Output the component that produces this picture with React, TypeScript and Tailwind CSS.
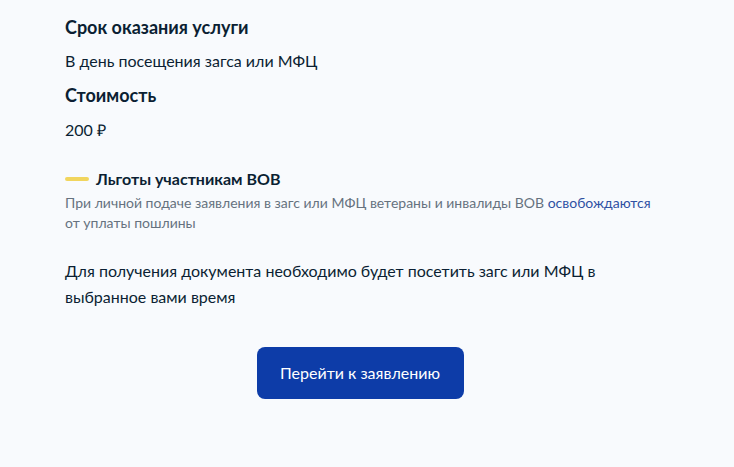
export default function App() {
	return (
		<div className="min-h-[467px] w-full bg-[#f8fafd] [font-family:Lato,sans-serif] text-[#0b1f33]">
			<div className="w-[590px] pl-[65px] pt-[15px] box-content">
				<h3 className="text-[18px] font-bold leading-[24px]">Срок оказания услуги</h3>
				<p className="mt-[10px] text-[16px] leading-[24px]">В день посещения загса или МФЦ</p>
				<h3 className="mt-[10px] text-[18px] font-bold leading-[24px]">Стоимость</h3>
				<p className="mt-[11px] text-[16px] leading-[24px]">200 ₽</p>

				{/* льготы */}
				<div className="mt-[25px] flex items-center gap-[7px]">
					<span className="h-[4px] w-[24px] rounded-full bg-[#f1d55e]" />
					<span className="text-[16px] font-bold leading-[24px]">Льготы участникам ВОВ</span>
				</div>
				<p className="mt-[2px] text-[14px] leading-[20px] text-[#66727f]">
					При личной подаче заявления в загс или МФЦ ветераны и инвалиды ВОВ{" "}
					<a href="#" className="text-[#2f51a3]">освобождаются</a> от уплаты пошлины
				</p>

				<p className="mt-[25px] text-[16px] leading-[26px]">
					Для получения документа необходимо будет посетить загс или МФЦ в выбранное вами время
				</p>

				<div className="mt-[37px] flex justify-center">
					<button className="h-[52px] w-[207px] rounded-[8px] bg-[#0d3ca8] text-[16px] text-white">
						Перейти к заявлению
					</button>
				</div>
			</div>
		</div>
	)
}
